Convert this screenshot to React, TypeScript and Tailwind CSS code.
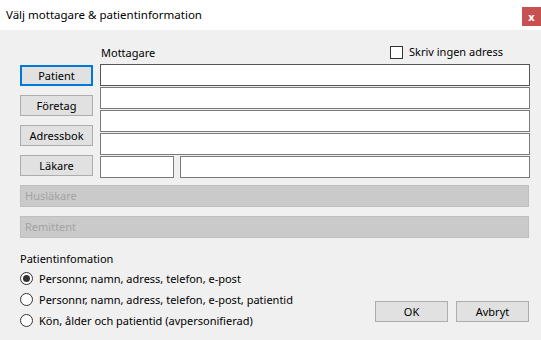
import { useState } from "react";

const font = { fontFamily: '"Noto Sans", "Open Sans", sans-serif' };

function WinButton({ label, focused }: { label: string; focused?: boolean }) {
  return (
    <button
      className={
        "h-[21px] w-[73px] bg-[#e1e1e1] text-[11px] leading-none text-black flex items-center justify-center " +
        (focused ? "border-2 border-[#0078d7]" : "border border-[#adadad]")
      }
    >
      {label}
    </button>
  );
}

function Field({ dark, className = "" }: { dark?: boolean; className?: string }) {
  return (
    <div
      className={
        "h-[22px] bg-white border " +
        (dark ? "border-[#555555] " : "border-[#7a7a7a] ") +
        className
      }
    />
  );
}

function Radio({ label, checked, onClick }: { label: string; checked: boolean; onClick: () => void }) {
  return (
    <div className="h-[21px] flex items-center cursor-default" onClick={onClick}>
      <span className="w-[13px] h-[13px] rounded-full border border-[#333333] bg-white flex items-center justify-center">
        {checked && <span className="w-[7px] h-[7px] rounded-full bg-[#333333]" />}
      </span>
      <span className="ml-[6px] text-[11px] leading-[16px]">{label}</span>
    </div>
  );
}

export default function App() {
  const [info, setInfo] = useState(0);
  const [noAddress, setNoAddress] = useState(false);

  const options = [
    "Personnr, namn, adress, telefon, e-post",
    "Personnr, namn, adress, telefon, e-post, patientid",
    "Kön, ålder och patientid (avpersonifierad)",
  ];

  return (
    <div className="w-[541px] h-[340px] flex flex-col bg-[#f0f0f0] text-black overflow-hidden" style={font}>
      {/* title bar */}
      <div className="h-[30px] bg-white flex items-start justify-between shrink-0">
        <span className="mt-[7px] ml-[6px] text-[11.5px] leading-[16px]">Välj mottagare &amp; patientinformation</span>
        <span className="mt-[7px] w-[19px] h-[19px] bg-[#c75050] text-white text-[11px] font-bold flex items-center justify-center leading-none">
          x
        </span>
      </div>

      <div className="flex-1 pl-[20px] pr-[11px] pt-[13px] flex flex-col">
        {/* header */}
        <div className="h-[21px] flex">
          <div className="w-[370px] flex items-end pb-[3px]">
            <span className="ml-[81px] text-[11px] leading-[16px]">Mottagare</span>
          </div>
          <label
            className="self-start mt-[1px] flex items-center gap-[6px] cursor-default"
            onClick={() => setNoAddress((v) => !v)}
          >
            <span className="w-[13px] h-[13px] border border-[#333333] bg-white flex items-center justify-center text-[10px] leading-none">
              {noAddress ? "✓" : ""}
            </span>
            <span className="text-[11px] leading-[16px]">Skriv ingen adress</span>
          </label>
        </div>

        {/* recipient */}
        <div className="flex gap-[7px]">
          <div className="flex flex-col gap-[9px] pt-[1px]">
            <WinButton label="Patient" focused />
            <WinButton label="Företag" />
            <WinButton label="Adressbok" />
            <WinButton label="Läkare" />
          </div>
          <div className="flex-1 flex flex-col gap-[1px]">
            <Field dark />
            <Field />
            <Field />
            <Field />
            <div className="flex gap-[6px]">
              <Field className="w-[74px]" />
              <Field className="flex-1" />
            </div>
          </div>
        </div>

        {/* disabled */}
        <div className="mt-[7px] flex flex-col gap-[9px] pr-[1px]">
          <div className="h-[22px] bg-[#cacaca] border border-[#bfbfbf] text-[#a3a3a3] text-[11px] leading-[20px] pl-[4px]">
            Husläkare
          </div>
          <div className="h-[22px] bg-[#cacaca] border border-[#bfbfbf] text-[#a3a3a3] text-[11px] leading-[20px] pl-[4px]">
            Remittent
          </div>
        </div>

        {/* patient info */}
        <div className="mt-[13px] flex justify-between items-end">
          <div className="flex flex-col">
            <span className="text-[11px] leading-[16px] mb-[1px]">Patientinfomation</span>
            {options.map((o, i) => (
              <Radio key={o} label={o} checked={info === i} onClick={() => setInfo(i)} />
            ))}
          </div>
          <div className="flex gap-[8px] mb-[9px] mr-[1px]">
            <WinButton label="OK" />
            <WinButton label="Avbryt" />
          </div>
        </div>
      </div>
    </div>
  );
}
